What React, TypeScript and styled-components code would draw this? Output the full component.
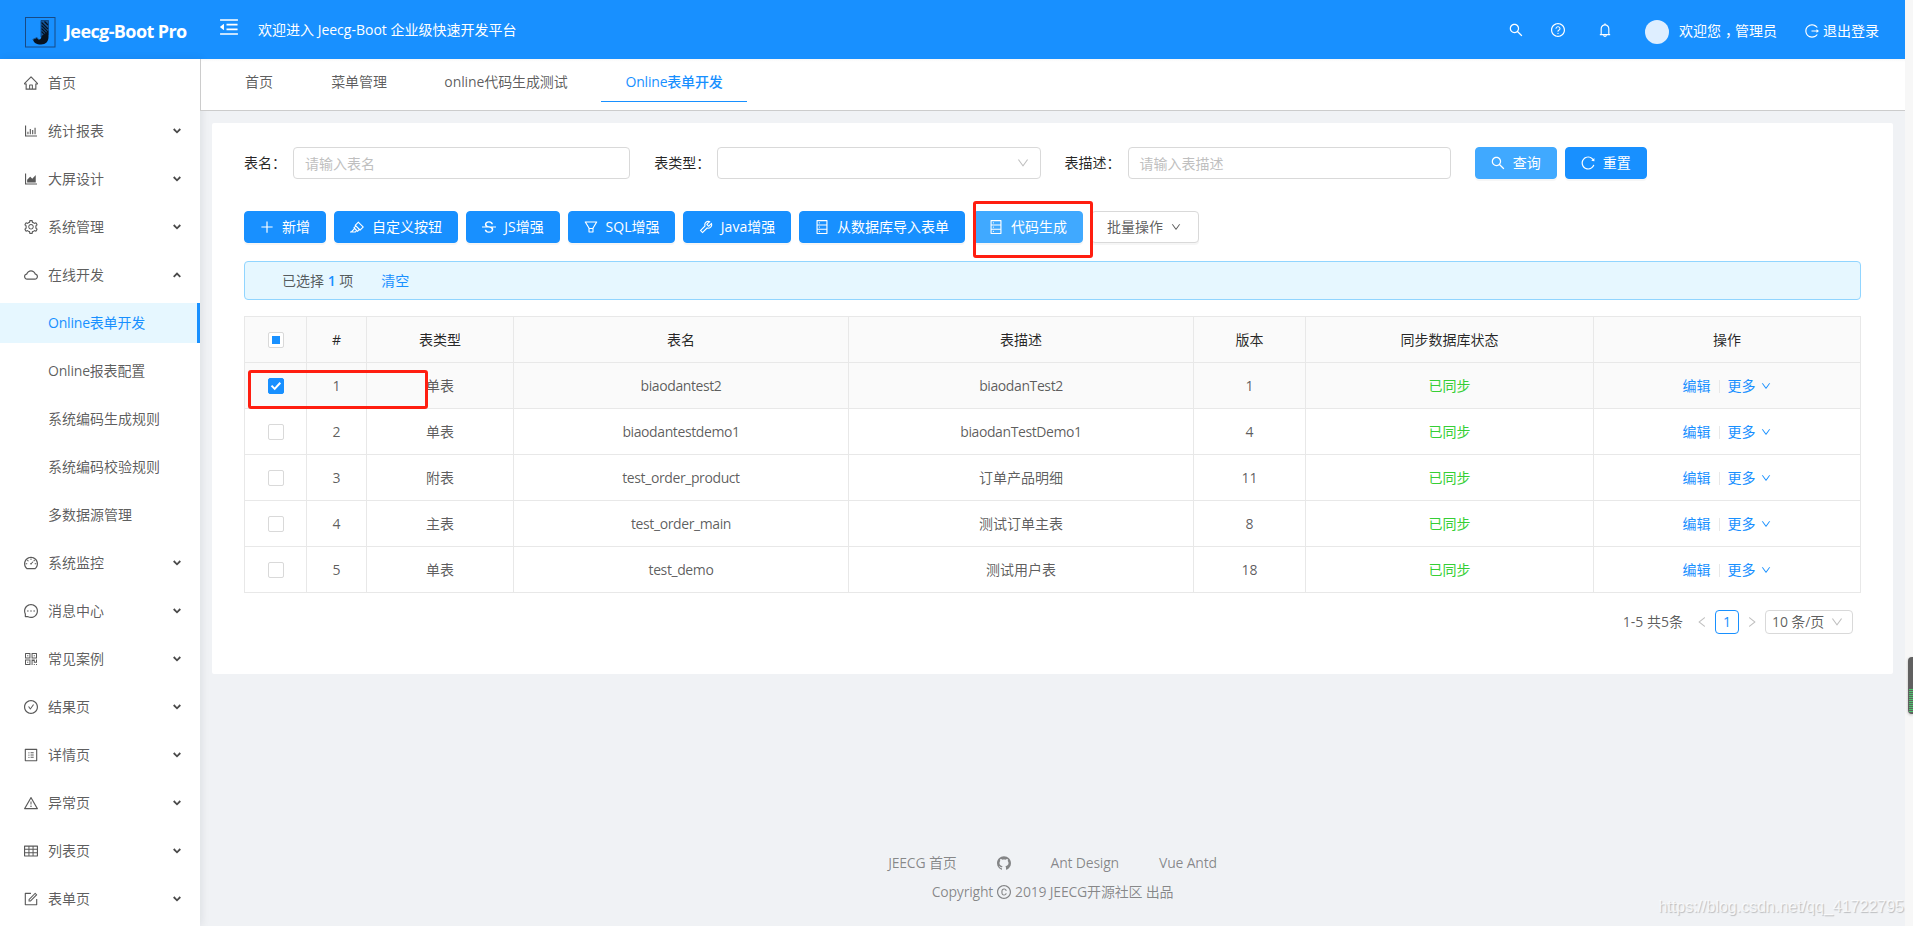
import React from 'react';
import styled, { createGlobalStyle, css } from 'styled-components';
import {
  AiOutlineHome, AiOutlineBarChart, AiOutlineAreaChart, AiOutlineSetting, AiOutlineCloud,
  AiOutlineDashboard, AiOutlineMessage, AiOutlineQrcode, AiOutlineCheckCircle, AiOutlineProfile,
  AiOutlineWarning, AiOutlineTable, AiOutlineForm, AiOutlineMenuFold, AiOutlineSearch,
  AiOutlineQuestionCircle, AiOutlineBell, AiOutlineLogout, AiOutlinePlus, AiOutlineHighlight,
  AiOutlineStrikethrough, AiOutlineFilter, AiOutlineTool, AiOutlineDatabase, AiOutlineDown,
  AiOutlineReload, AiOutlineLeft, AiOutlineRight, AiFillGithub, AiOutlineCopyright,
} from 'react-icons/ai';

const blue = '#1890ff';
const blueLight = '#40a9ff';
const line = '#e8e8e8';
const inputLine = '#d9d9d9';

const GlobalStyle = createGlobalStyle`
  * { box-sizing: border-box; }
  body {
    margin: 0;
    font-family: 'Open Sans', 'Noto Sans CJK SC', sans-serif;
    font-size: 14px;
    line-height: 21px;
    color: rgba(0, 0, 0, 0.65);
    background: #f7f7f7;
  }
  svg { display: block; flex: none; }
`;

const Page = styled.div`
  position: relative;
  display: flex;
  flex-direction: column;
  height: 926px;
  padding-right: 8px;
  overflow: hidden;
`;

/* header */
const Header = styled.header`
  display: flex;
  flex: none;
  height: 59px;
  padding: 0 26px 0 25px;
  color: #fff;
  background: ${blue};
`;
const Brand = styled.div`
  display: flex;
  align-items: center;
  width: 194px;
  padding-top: 5px;
`;
const BrandName = styled.h1`
  margin: -1px 0 0 9px;
  font-size: 18px;
  font-weight: 700;
  letter-spacing: -0.6px;
  white-space: nowrap;
`;
const Welcome = styled.div`
  display: flex;
  align-items: center;
  flex: 1;
  height: 59px;
  svg { margin: -5px 19px 0 0; }
`;
const HeaderTools = styled.div`
  display: flex;
  align-items: center;
  height: 61px;
`;
const ToolIcon = styled.span<{ $right: number }>`
  margin: -2px ${(p) => p.$right}px 0 0;
`;
const Avatar = styled.span`
  width: 24px;
  height: 24px;
  margin: 3px 10px 0 0;
  border-radius: 50%;
  background: #deeeff;
`;
const Greeting = styled.span`
  width: 126px;
  white-space: nowrap;
`;
const Comma = styled.span`
  padding: 0 3px 0 4px;
  font-feature-settings: 'halt' 1;
`;
const Logout = styled.a`
  display: flex;
  align-items: center;
  gap: 4px;
`;

/* body */
const Body = styled.div`
  display: flex;
  flex: 1;
  min-height: 0;
`;
const Sider = styled.nav`
  position: relative;
  z-index: 1;
  flex: none;
  width: 200px;
  padding-top: 4px;
  background: #fff;
  box-shadow: 2px 0 8px rgba(0, 21, 41, 0.08);
`;
const MenuItem = styled.div<{ $sub?: boolean; $active?: boolean }>`
  display: flex;
  align-items: center;
  height: 40px;
  margin-bottom: 8px;
  padding: 0 19px 0 ${(p) => (p.$sub ? 48 : 24)}px;
  ${(p) => p.$active && css`
    color: ${blue};
    background: #e6f7ff;
    border-right: 3px solid ${blue};
  `}
`;
const MenuText = styled.span<{ $sub?: boolean; $tight?: boolean }>`
  flex: 1;
  margin: -2px 0 0 ${(p) => (p.$sub ? 0 : 10)}px;
  letter-spacing: ${(p) => (p.$tight ? '-0.2px' : '0')};
`;
const Content = styled.main`
  display: flex;
  flex-direction: column;
  flex: 1;
  min-width: 0;
  background: #f0f2f5;
`;
const Tabs = styled.div`
  position: relative;
  z-index: 2;
  display: flex;
  gap: 10px;
  flex: none;
  height: 52px;
  padding-left: 20px;
  background: linear-gradient(#f8f8f8, #fff 3px);
  border: solid #ccc;
  border-width: 0 0 1px 1px;
`;
const Tab = styled.div<{ $width: number; $active?: boolean }>`
  width: ${(p) => p.$width}px;
  height: 43px;
  padding-top: 12px;
  text-align: center;
  white-space: nowrap;
  letter-spacing: -0.1px;
  border-bottom: 1px solid transparent;
  ${(p) => p.$active && css`
    color: ${blue};
    font-weight: 500;
    letter-spacing: -0.2px;
    border-color: ${blue};
  `}
`;
const Card = styled.section`
  height: 551px;
  margin: 12px;
  padding: 24px 32px 0;
  background: #fff;
  border-radius: 2px;
`;

/* search form */
const SearchRow = styled.div`
  display: grid;
  grid-template-columns: repeat(4, 1fr);
  column-gap: 24px;
  height: 32px;
`;
const Field = styled.div`
  display: flex;
  align-items: center;
`;
const FieldLabel = styled.label<{ $width: number }>`
  flex: none;
  width: ${(p) => p.$width}px;
  margin-top: -2px;
  color: rgba(0, 0, 0, 0.85);
`;
const FieldBox = styled.div`
  display: flex;
  align-items: center;
  justify-content: flex-end;
  flex: 1;
  height: 32px;
  padding: 0 11px;
  color: #bfbfbf;
  border: 1px solid ${inputLine};
  border-radius: 4px;
`;
const Placeholder = styled.span`
  flex: 1;
`;

/* buttons */
const Toolbar = styled.div`
  position: relative;
  display: flex;
  gap: 8px;
  margin-top: 32px;
`;
const SearchActions = styled.div`
  display: flex;
  gap: 8px;
`;
const Button = styled.button<{ $width: number; $tone?: 'hover' | 'plain' }>`
  display: flex;
  align-items: center;
  justify-content: center;
  gap: 8px;
  flex: none;
  width: ${(p) => p.$width}px;
  height: 32px;
  padding: 0;
  font: inherit;
  white-space: nowrap;
  border: 1px solid ${blue};
  border-radius: 4px;
  color: #fff;
  background: ${blue};
  box-shadow: 0 2px 0 rgba(0, 0, 0, 0.035);
  ${(p) => p.$tone === 'hover' && css`
    background: ${blueLight};
    border-color: ${blueLight};
  `}
  ${(p) => p.$tone === 'plain' && css`
    padding-right: 2px;
    color: rgba(0, 0, 0, 0.65);
    background: #fff;
    border-color: ${inputLine};
  `}
`;
const ButtonText = styled.span`
  margin-top: -2px;
`;
const Highlight = styled.div<{ $x: number; $y: number; $w: number; $h: number }>`
  position: absolute;
  left: ${(p) => p.$x}px;
  top: ${(p) => p.$y}px;
  width: ${(p) => p.$w}px;
  height: ${(p) => p.$h}px;
  border: 3px solid #ff1e10;
  border-radius: 3px;
`;

const Notice = styled.div`
  display: flex;
  align-items: center;
  height: 39px;
  margin-top: 18px;
  padding: 0 37px;
  white-space: pre;
  background: #e6f7ff;
  border: 1px solid #91d5ff;
  border-radius: 4px;
  b { color: ${blue}; font-weight: 600; }
  a { color: ${blue}; margin-left: 28px; }
`;

/* table */
const TableWrap = styled.div`
  position: relative;
  margin-top: 16px;
`;
const Table = styled.table`
  width: 1617px;
  table-layout: fixed;
  border-collapse: separate;
  border-spacing: 0;
  border: solid ${line};
  border-width: 1px 0 0 1px;
  th, td {
    height: 46px;
    padding: 0;
    text-align: center;
    border: solid ${line};
    border-width: 0 1px 1px 0;
  }
  th {
    font-weight: 400;
    color: rgba(0, 0, 0, 0.85);
    background: #fafafa;
  }
`;
const Row = styled.tr<{ $selected: boolean }>`
  background: ${(p) => (p.$selected ? '#fafafa' : '#fff')};
`;
const Identifier = styled.span`
  letter-spacing: -0.4px;
`;
const CheckBox = styled.span<{ $checked?: boolean }>`
  display: flex;
  align-items: center;
  justify-content: center;
  width: 16px;
  height: 16px;
  margin: 1px auto 0;
  border: 1px solid ${(p) => (p.$checked ? blue : inputLine)};
  border-radius: 2px;
  background: ${(p) => (p.$checked ? blue : '#fff')};
`;
const Partial = styled.span`
  width: 8px;
  height: 8px;
  background: ${blue};
`;
const Synced = styled.span`
  color: #35cf35;
`;
const Actions = styled.div`
  display: flex;
  align-items: center;
  justify-content: center;
  margin-right: 1px;
  color: ${blue};
  svg { margin: 1px 0 0 5px; }
`;
const Divider = styled.span`
  width: 1px;
  height: 13px;
  margin: 1px 8px 0;
  background: ${line};
`;

/* pagination */
const Pagination = styled.div`
  display: flex;
  align-items: center;
  justify-content: flex-end;
  height: 24px;
  margin: 17px 8px 0 0;
`;
const Arrow = styled.span`
  display: flex;
  justify-content: center;
  width: 26px;
  color: #bfbfbf;
`;
const PageNumber = styled.span`
  width: 24px;
  height: 24px;
  text-align: center;
  color: ${blue};
  border: 1px solid ${blue};
  border-radius: 4px;
`;
const PageTotal = styled.span`
  margin: -1px 6px 0 0;
`;
const PageSize = styled.span`
  display: flex;
  align-items: center;
  justify-content: space-between;
  width: 88px;
  height: 24px;
  padding: 0 9px 1px 6px;
  white-space: nowrap;
  letter-spacing: -0.1px;
  border: 1px solid ${inputLine};
  border-radius: 4px;
  svg { color: #bfbfbf; }
`;

/* footer */
const Footer = styled.footer`
  display: flex;
  flex-direction: column;
  align-items: center;
  gap: 8px;
  margin-top: 166px;
  letter-spacing: -0.2px;
  color: rgba(0, 0, 0, 0.45);
`;
const FooterLinks = styled.div`
  display: flex;
  align-items: center;
  gap: 40px;
`;
const Copyright = styled.div`
  display: flex;
  align-items: center;
  gap: 4px;
`;

/* overlays */
const Meter = styled.div`
  position: absolute;
  right: 0;
  top: 657px;
  width: 5px;
  height: 57px;
  padding: 32px 0 0 1px;
  border-radius: 4px 0 0 4px;
  background: #606060;
  box-shadow: 0 1px 3px rgba(0, 0, 0, 0.25);
`;
const MeterBars = styled.div`
  height: 23px;
  background: repeating-linear-gradient(#4cc76c 0 1px, #606060 1px 2px);
`;
const Watermark = styled.div`
  position: absolute;
  right: 9px;
  top: 896px;
  font: 16px/22px 'Liberation Sans', sans-serif;
  color: rgba(255, 255, 255, 0.75);
  text-shadow: 1px 1px 1px rgba(0, 0, 0, 0.22);
`;

const Caret = ({ up }: { up?: boolean }) => (
  <svg width="8" height="6" viewBox="0 0 8 6" fill="none" stroke="#4a4a4a" strokeWidth="1.8">
    <path d={up ? 'M.7 4.8 4 1.5l3.3 3.3' : 'M.7 1 4 4.3 7.3 1'} />
  </svg>
);

const Logo = () => (
  <svg width="31" height="31" viewBox="0 0 31 31">
    <rect x=".5" y=".5" width="29.5" height="29.5" fill="none" stroke="#174a86" />
    <path d="M16 3.500h7.500V17l-7.500 4z" fill="#14589f" />
    <path d="M16.500 5.500 23 12M16.500 8.500 23 15M16.500 11.500 23 18M16.500 14.500 22 20M19.500 4.500 23 8" stroke="#07121f" strokeWidth="1.3" />
    <path d="M23.500 14v6c0 4.500-2.600 7.500-7.500 7.500-4.500 0-7.500-2-8-5l4-2c1.500 3 4.500 2.500 4.500-1.500z" fill="#07121f" />
    <path d="M7.500 22.500 12 20.500l1.800 2.200" fill="none" stroke="#14589f" />
    <path d="M16 20V3.500h7.500V18" fill="none" stroke="#0d3d75" strokeWidth=".8" />
  </svg>
);

const CheckMark = () => (
  <svg width="12" height="10" viewBox="0 0 12 10" fill="none" stroke="#fff" strokeWidth="2">
    <path d="M1.500 4.600 4.700 7.900 10.300 1.800" />
  </svg>
);

type Icon = React.ComponentType<{ size?: number; viewBox?: string }>;

/* Crops the 64-unit margin of the Ant Design drawings so the shape fills its box. */
const Glyph = ({ of: Shape, size = 14 }: { of: Icon; size?: number }) => (
  <Shape size={size} viewBox="64 64 896 896" />
);

const topMenu: [Icon, string][] = [
  [AiOutlineHome, '首页'],
  [AiOutlineBarChart, '统计报表'],
  [AiOutlineAreaChart, '大屏设计'],
  [AiOutlineSetting, '系统管理'],
  [AiOutlineCloud, '在线开发'],
];
const onlineMenu = ['Online表单开发', 'Online报表配置', '系统编码生成规则', '系统编码校验规则', '多数据源管理'];
const restMenu: [Icon, string][] = [
  [AiOutlineDashboard, '系统监控'],
  [AiOutlineMessage, '消息中心'],
  [AiOutlineQrcode, '常见案例'],
  [AiOutlineCheckCircle, '结果页'],
  [AiOutlineProfile, '详情页'],
  [AiOutlineWarning, '异常页'],
  [AiOutlineTable, '列表页'],
  [AiOutlineForm, '表单页'],
];
const tabs: [string, number][] = [['首页', 76], ['菜单管理', 104], ['online代码生成测试', 170], ['Online表单开发', 146]];
const toolButtons: [Icon, string, number][] = [
  [AiOutlinePlus, '新增', 82],
  [AiOutlineHighlight, '自定义按钮', 124],
  [AiOutlineStrikethrough, 'JS增强', 94],
  [AiOutlineFilter, 'SQL增强', 107],
  [AiOutlineTool, 'Java增强', 108],
  [AiOutlineDatabase, '从数据库导入表单', 166],
];
const columns: [string, number][] = [
  ['', 62], ['#', 60], ['表类型', 147], ['表名', 335], ['表描述', 345], ['版本', 112], ['同步数据库状态', 288], ['操作', 267],
];
const rows = [
  ['单表', 'biaodantest2', 'biaodanTest2', '1'],
  ['单表', 'biaodantestdemo1', 'biaodanTestDemo1', '4'],
  ['附表', 'test_order_product', '订单产品明细', '11'],
  ['主表', 'test_order_main', '测试订单主表', '8'],
  ['单表', 'test_demo', '测试用户表', '18'],
];

const MenuGroup = ({ items }: { items: [Icon, string][] }) => (
  <>
    {items.map(([icon, text]) => (
      <MenuItem key={text}>
        <Glyph of={icon} />
        <MenuText>{text}</MenuText>
        {text !== '首页' && <Caret up={text === '在线开发'} />}
      </MenuItem>
    ))}
  </>
);

export default function App() {
  return (
    <Page>
      <GlobalStyle />
      <Header>
        <Brand>
          <Logo />
          <BrandName>Jeecg-Boot Pro</BrandName>
        </Brand>
        <Welcome>
          <Glyph of={AiOutlineMenuFold} size={20} />
          <span>欢迎进入 Jeecg-Boot 企业级快速开发平台</span>
        </Welcome>
        <HeaderTools>
          <ToolIcon $right={28}><Glyph of={AiOutlineSearch} /></ToolIcon>
          <ToolIcon $right={33}><Glyph of={AiOutlineQuestionCircle} /></ToolIcon>
          <ToolIcon $right={33}><Glyph of={AiOutlineBell} /></ToolIcon>
          <Avatar />
          <Greeting>欢迎您<Comma>，</Comma>管理员</Greeting>
          <Logout><Glyph of={AiOutlineLogout} />退出登录</Logout>
        </HeaderTools>
      </Header>
      <Body>
        <Sider>
          <MenuGroup items={topMenu} />
          {onlineMenu.map((text, i) => (
            <MenuItem key={text} $sub $active={i === 0}>
              <MenuText $sub $tight={text.startsWith('Online')}>{text}</MenuText>
            </MenuItem>
          ))}
          <MenuGroup items={restMenu} />
        </Sider>
        <Content>
          <Tabs>
            {tabs.map(([text, width], i) => (
              <Tab key={text} $width={width} $active={i === 3}>{text}</Tab>
            ))}
          </Tabs>
          <Card>
            <SearchRow>
              <Field>
                <FieldLabel $width={49}>表名：</FieldLabel>
                <FieldBox><Placeholder>请输入表名</Placeholder></FieldBox>
              </Field>
              <Field>
                <FieldLabel $width={63}>表类型：</FieldLabel>
                <FieldBox><Glyph of={AiOutlineDown} size={12} /></FieldBox>
              </Field>
              <Field>
                <FieldLabel $width={63}>表描述：</FieldLabel>
                <FieldBox><Placeholder>请输入表描述</Placeholder></FieldBox>
              </Field>
              <SearchActions>
                <Button $width={82} $tone="hover"><Glyph of={AiOutlineSearch} /><ButtonText>查询</ButtonText></Button>
                <Button $width={82}><Glyph of={AiOutlineReload} /><ButtonText>重置</ButtonText></Button>
              </SearchActions>
            </SearchRow>
            <Toolbar>
              {toolButtons.map(([icon, text, width]) => (
                <Button key={text} $width={width}><Glyph of={icon} /><ButtonText>{text}</ButtonText></Button>
              ))}
              <Button $width={110} $tone="hover"><Glyph of={AiOutlineDatabase} /><ButtonText>代码生成</ButtonText></Button>
              <Button $width={108} $tone="plain"><ButtonText>批量操作</ButtonText><Glyph of={AiOutlineDown} size={10} /></Button>
              <Highlight $x={729} $y={-10} $w={120} $h={57} />
            </Toolbar>
            <Notice>已选择 <b>1</b> 项<a>清空</a></Notice>
            <TableWrap>
              <Table>
                <colgroup>
                  {columns.map(([name, width]) => <col key={name} width={width} />)}
                </colgroup>
                <thead>
                  <tr>
                    {columns.map(([name]) => (
                      <th key={name}>{name || <CheckBox><Partial /></CheckBox>}</th>
                    ))}
                  </tr>
                </thead>
                <tbody>
                  {rows.map((cells, i) => (
                    <Row key={cells[1]} $selected={i === 0}>
                      <td><CheckBox $checked={i === 0}>{i === 0 && <CheckMark />}</CheckBox></td>
                      <td>{i + 1}</td>
                      {cells.map((cell) => (
                        <td key={cell}>{/^[a-z]/.test(cell) ? <Identifier>{cell}</Identifier> : cell}</td>
                      ))}
                      <td><Synced>已同步</Synced></td>
                      <td>
                        <Actions>编辑<Divider />更多<Glyph of={AiOutlineDown} size={10} /></Actions>
                      </td>
                    </Row>
                  ))}
                </tbody>
              </Table>
              <Highlight $x={4} $y={54} $w={180} $h={39} />
            </TableWrap>
            <Pagination>
              <PageTotal>1-5 共5条</PageTotal>
              <Arrow><Glyph of={AiOutlineLeft} size={12} /></Arrow>
              <PageNumber>1</PageNumber>
              <Arrow><Glyph of={AiOutlineRight} size={12} /></Arrow>
              <PageSize>10 条/页<Glyph of={AiOutlineDown} size={12} /></PageSize>
            </Pagination>
          </Card>
          <Footer>
            <FooterLinks>
              <span>JEECG 首页</span>
              <Glyph of={AiFillGithub} />
              <span>Ant Design</span>
              <span>Vue Antd</span>
            </FooterLinks>
            <Copyright>Copyright <Glyph of={AiOutlineCopyright} /> 2019 JEECG开源社区 出品</Copyright>
          </Footer>
        </Content>
      </Body>
      <Meter><MeterBars /></Meter>
      <Watermark>https://blog.csdn.net/qq_41722795</Watermark>
    </Page>
  );
}
